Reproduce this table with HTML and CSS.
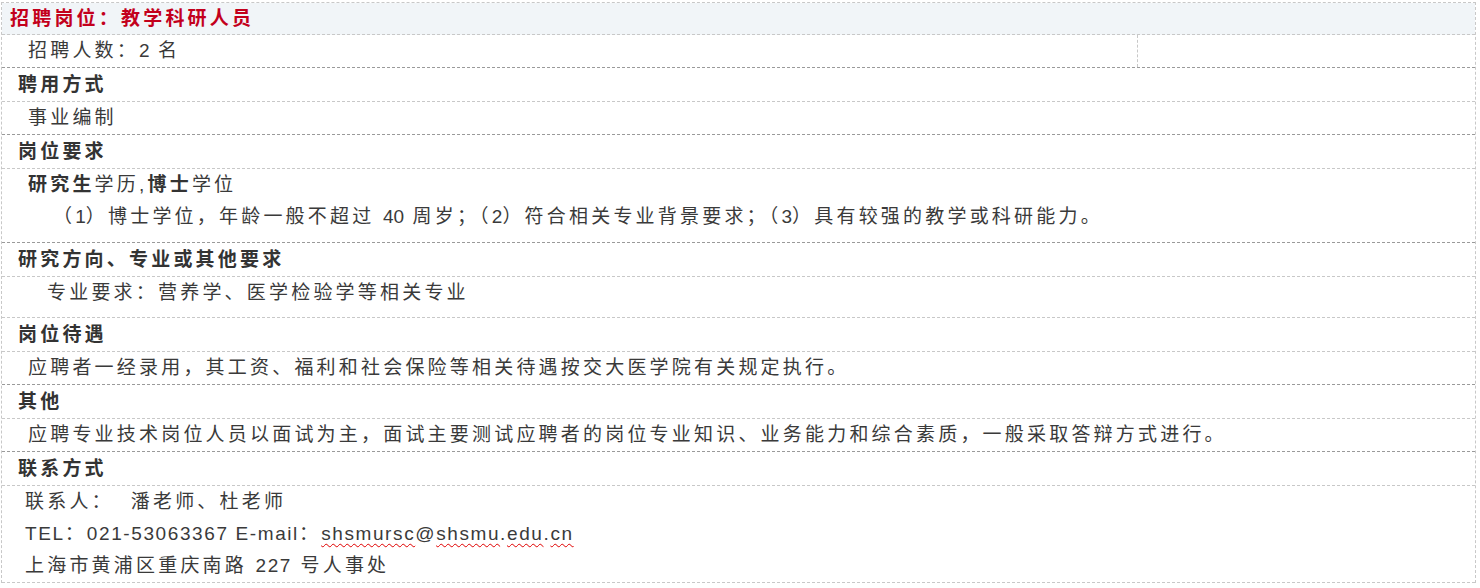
FILE: index.html
```html
<!DOCTYPE html>
<html lang="zh-CN">
  <head>
    <meta charset="UTF-8" />
    <meta name="viewport" content="width=device-width, initial-scale=1.0" />
    <title>招聘岗位：教学科研人员</title>
    <link rel="stylesheet" href="styles.css">
  </head>
  <body>
    <div class="job">
      <div class="title">招聘岗位：教学科研人员</div>

      <div class="split dark">
        <div class="cell indent">招聘人数：<span class="en">2</span>&nbsp;名</div>
        <div class="cell"></div>
      </div>

      <div class="label">聘用方式</div>
      <div class="val dark">事业编制</div>

      <div class="label">岗位要求</div>
      <div class="val dark gap">
        <div><b>研究生</b>学历,<b>博士</b>学位</div>
        <div class="sub">（<span class="en">1</span>）博士学位，年龄一般不超过 <span class="en">40</span> 周岁；（<span class="en">2</span>）符合相关专业背景要求；（<span class="en">3</span>）具有较强的教学或科研能力。</div>
      </div>

      <div class="label">研究方向、专业或其他要求</div>
      <div class="val gap major">专业要求：营养学、医学检验学等相关专业</div>

      <div class="label">岗位待遇</div>
      <div class="val dark">应聘者一经录用，其工资、福利和社会保险等相关待遇按交大医学院有关规定执行。</div>

      <div class="label">其他</div>
      <div class="val dark">应聘专业技术岗位人员以面试为主，面试主要测试应聘者的岗位专业知识、业务能力和综合素质，一般采取答辩方式进行。</div>

      <div class="label">联系方式</div>
      <div class="val contact">
        <div>联系人：&nbsp;&nbsp;潘老师、杜老师</div>
        <div><span class="en">TEL</span>：<span class="en">021-53063367 E-mail</span>：<span class="en"><span class="typo">shsmursc</span>@<span class="typo">shsmu</span>.<span class="typo">edu</span>.<span class="typo">cn</span></span></div>
        <div>上海市黄浦区重庆南路 <span class="en">227</span> 号人事处</div>
      </div>
    </div>
  </body>
</html>
```

FILE: styles.css
```css
body {
  margin: 0;
  background: #fff;
  font-family: "Liberation Sans", Arial, "Noto Sans CJK SC", sans-serif;
  font-size: 19px;
  color: #3a3a3a;
}
.job {
  box-sizing: border-box;
  width: 1475px;
  margin: 2px 0 0 1px;
  border: 1px dashed #c8c8c8;
  border-bottom: none;
  letter-spacing: 3.2px;
}
.job > div {
  border-bottom: 1px dashed #c8c8c8;
}
.job > .dark {
  border-bottom-color: #9a9a9a;
}
.en {
  letter-spacing: 0;
}
.title {
  line-height: 31px;
  padding-left: 8px;
  background-color: #f1f5f8;
  color: #c3001c;
  font-weight: bold;
}
.split {
  display: grid;
  grid-template-columns: 1136px 1fr;
}
.split .cell {
  line-height: 32px;
}
.split .cell:first-child {
  border-right: 1px dashed #c8c8c8;
}
.indent {
  padding-left: 26px;
}
.label {
  line-height: 33px;
  padding-left: 16px;
  font-weight: bold;
  color: #333;
}
.val {
  line-height: 32px;
  padding-left: 26px;
}
.val b {
  color: #333;
}
.gap {
  padding-bottom: 9px;
}
.sub {
  padding-left: 25px;
}
.major {
  padding-left: 45px;
  padding-bottom: 8px;
}
.contact {
  padding-left: 23px;
}
.contact .en {
  letter-spacing: 1.6px;
}
.typo {
  text-decoration: underline wavy #e00000;
  text-decoration-thickness: 1px;
  text-underline-offset: 3px;
}
```
